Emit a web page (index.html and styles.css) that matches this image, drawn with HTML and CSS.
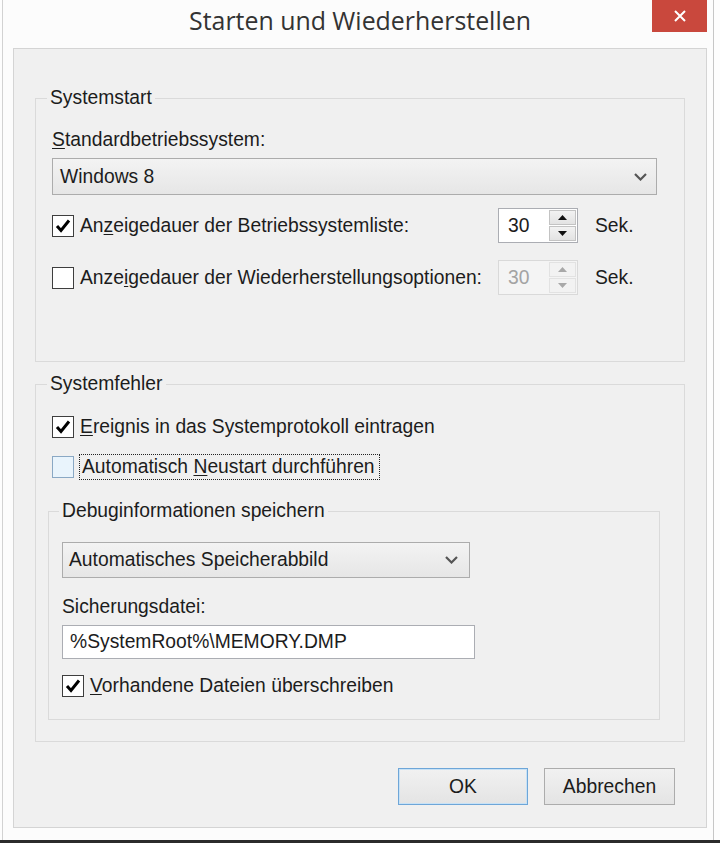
FILE: index.html
```html
<!DOCTYPE html>
<html lang="de">
<head>
<meta charset="utf-8">
<title>Starten und Wiederherstellen</title>
<link rel="stylesheet" href="styles.css">
</head>
<body>
<div class="window">
  <div class="titlebar">
    <div class="title">Starten und Wiederherstellen</div>
    <div class="close">
      <svg width="12" height="12" viewBox="0 0 12 12"><path d="M1 1 L11 11 M11 1 L1 11" stroke="#fff" stroke-width="2" fill="none"/></svg>
    </div>
  </div>
  <div class="panel">
    <fieldset class="group g1">
      <legend>Systemstart</legend>
      <div class="label"><u>S</u>tandardbetriebssystem:</div>
      <div class="combo combo-os">
        <span>Windows 8</span>
        <svg class="chev" width="13" height="8" viewBox="0 0 13 8"><path d="M1 1 L6.5 6.5 L12 1" stroke="#555" stroke-width="2.2" fill="none"/></svg>
      </div>
      <div class="row spinrow r1">
        <div class="cbline">
          <span class="cb"><svg width="18" height="18" viewBox="0 0 18 18"><path d="M3 9 L7 13.5 L15 3.5" stroke="#000" stroke-width="3" fill="none"/></svg></span>
          <span>An<u>z</u>eigedauer der Betriebssystemliste:</span>
        </div>
        <div class="spin">
          <span class="val">30</span>
          <span class="btns">
            <span class="sb"><svg width="9" height="5" viewBox="0 0 9 5"><path d="M0 5 L4.5 0 L9 5 Z" fill="#111"/></svg></span>
            <span class="sb"><svg width="9" height="5" viewBox="0 0 9 5"><path d="M0 0 L4.5 5 L9 0 Z" fill="#111"/></svg></span>
          </span>
        </div>
        <span class="unit">Sek.</span>
      </div>
      <div class="row spinrow r2">
        <div class="cbline">
          <span class="cb"></span>
          <span>Anze<u>i</u>gedauer der Wiederherstellungsoptionen:</span>
        </div>
        <div class="spin disabled">
          <span class="val">30</span>
          <span class="btns">
            <span class="sb"><svg width="9" height="5" viewBox="0 0 9 5"><path d="M0 5 L4.5 0 L9 5 Z" fill="#a8a8a8"/></svg></span>
            <span class="sb"><svg width="9" height="5" viewBox="0 0 9 5"><path d="M0 0 L4.5 5 L9 0 Z" fill="#a8a8a8"/></svg></span>
          </span>
        </div>
        <span class="unit">Sek.</span>
      </div>
    </fieldset>

    <fieldset class="group g2">
      <legend>Systemfehler</legend>
      <div class="cbline row-ev">
        <span class="cb"><svg width="18" height="18" viewBox="0 0 18 18"><path d="M3 9 L7 13.5 L15 3.5" stroke="#000" stroke-width="3" fill="none"/></svg></span>
        <span><u>E</u>reignis in das Systemprotokoll eintragen</span>
      </div>
      <div class="cbline row-auto">
        <span class="cb hover"></span>
        <span class="focus">Automatisch <u>N</u>eustart durchführen</span>
      </div>
      <fieldset class="group g3">
        <legend>Debuginformationen speichern</legend>
        <div class="combo combo-dump">
          <span>Automatisches Speicherabbild</span>
          <svg class="chev" width="13" height="8" viewBox="0 0 13 8"><path d="M1 1 L6.5 6.5 L12 1" stroke="#555" stroke-width="2.2" fill="none"/></svg>
        </div>
        <div class="label lbl-file">Sicherungsdatei:</div>
        <div class="textbox">%SystemRoot%\MEMORY.DMP</div>
        <div class="cbline row-over">
          <span class="cb"><svg width="18" height="18" viewBox="0 0 18 18"><path d="M3 9 L7 13.5 L15 3.5" stroke="#000" stroke-width="3" fill="none"/></svg></span>
          <span><u>V</u>orhandene Dateien überschreiben</span>
        </div>
      </fieldset>
    </fieldset>

    <div class="buttons">
      <div class="btn default">OK</div>
      <div class="btn">Abbrechen</div>
    </div>
  </div>
</div>
<div class="bottombar"></div>
</body>
</html>
```

FILE: styles.css
```css
* { box-sizing: border-box; }
html, body { margin: 0; padding: 0; }
body {
  width: 720px;
  height: 843px;
  overflow: hidden;
  background: #fdfdfd;
  font-family: "Liberation Sans", Arial, sans-serif;
  font-size: 19.3px;
  line-height: 22px;
  color: #1c1c1c;
}
u { text-decoration-thickness: 1px; text-underline-offset: 2px; }

.window {
  margin-left: 2px;
  width: 712px;
  height: 840px;
  border-left: 1px solid #d2d2d2;
  border-right: 1px solid #c6c6c6;
  background: #fcfcfc;
  display: flex;
  flex-direction: column;
}

.titlebar {
  height: 48px;
  padding: 0 6px 0 10px;
  display: grid;
  grid-template-columns: 1fr auto 1fr;
}
.title {
  grid-column: 2;
  font-family: "Open Sans", "Noto Sans", sans-serif;
  font-size: 24.9px;
  line-height: 40px;
  color: #333;
  white-space: nowrap;
}
.close {
  grid-column: 3;
  justify-self: end;
  width: 55px;
  height: 32px;
  background: #c9483d;
  display: flex;
  align-items: center;
  justify-content: center;
}

.panel {
  margin-left: 10px;
  width: 694px;
  height: 780px;
  border: 1px solid #d4d4d4;
  background: #f0f0f0;
  padding: 38px 21px 0 21px;
}

.group {
  min-width: 0;
  border: 1px solid #dadada;
}
.group > legend {
  padding: 0 3px;
  line-height: 22px;
}

.g1 { margin: 0; padding: 20px 16px 66px 16px; }
.g1 > legend { margin-left: -5px; }

.g2 { margin: 11px 0 0 0; padding: 19px 16px 21px 16px; }
.g2 > legend { margin-left: -5px; }

.g3 { margin: 20px 0 0 -4px; width: 612px; padding: 20px 12px 20px 13px; }
.g3 > legend { margin-left: -3px; }

.label { height: 22px; }

.combo {
  display: flex;
  align-items: center;
  justify-content: space-between;
  border: 1px solid #acacac;
  background: linear-gradient(#f3f3f3, #e6e6e6);
  padding: 0 9px 0 7px;
}
.combo-os { margin-top: 7px; width: 605px; height: 37px; }
.combo-dump { width: 408px; height: 36px; padding-left: 6px; padding-right: 11px; }

.row { display: flex; align-items: center; }
.spinrow { height: 35px; }
.r1 { margin-top: 13px; }
.r2 { margin-top: 17px; }
.spinrow .cbline { width: 446px; }

.cbline { display: flex; align-items: center; gap: 6px; height: 26px; white-space: nowrap; }
.cb {
  width: 22px;
  height: 22px;
  flex: none;
  border: 1px solid #3e3e3e;
  background: #fff;
  display: flex;
  align-items: center;
  justify-content: center;
}
.cb.hover { border-color: #8aa8c4; background: #e9f4fc; }
.focus { border: 1px dotted #222; padding: 0 4px 1px 2px; margin-left: -1px; line-height: 23px; }

.row-auto { margin-top: 14px; }
.row-over { margin-top: 14px; }

.spin {
  width: 80px;
  height: 35px;
  border: 1px solid #abadb3;
  background: #fff;
  display: flex;
}
.spin .val { flex: 1; padding-left: 9px; line-height: 33px; }
.spin .btns {
  width: 28px;
  display: flex;
  flex-direction: column;
  gap: 1px;
  padding: 1px 1px 1px 0;
}
.spin .sb {
  flex: 1;
  display: flex;
  align-items: center;
  justify-content: center;
  background: linear-gradient(#f2f2f2, #e3e3e3);
  border: 1px solid #c3c3c3;
}
.spin.disabled { border-color: #d9d9d9; background: #f4f4f4; color: #a3a3a3; }
.spin.disabled .sb { background: #f2f2f2; border-color: #e2e2e2; }

.unit { margin-left: 17px; }

.lbl-file { margin-top: 18px; }
.textbox {
  margin-top: 7px;
  width: 413px;
  height: 34px;
  border: 1px solid #abadb3;
  background: #fff;
  padding-left: 7px;
  line-height: 32px;
}

.buttons {
  margin-top: 26px;
  display: flex;
  justify-content: flex-end;
  gap: 16px;
  padding-right: 10px;
}
.btn {
  width: 131px;
  height: 37px;
  border: 1px solid #acacac;
  background: linear-gradient(#f1f1f1, #e4e4e4);
  text-align: center;
  line-height: 35px;
}
.btn.default {
  width: 130px;
  border-color: #6ea6d8;
  box-shadow: inset 0 0 0 1px #c8e2f6;
}

.bottombar { height: 3px; background: #2b2b2b; }
```
